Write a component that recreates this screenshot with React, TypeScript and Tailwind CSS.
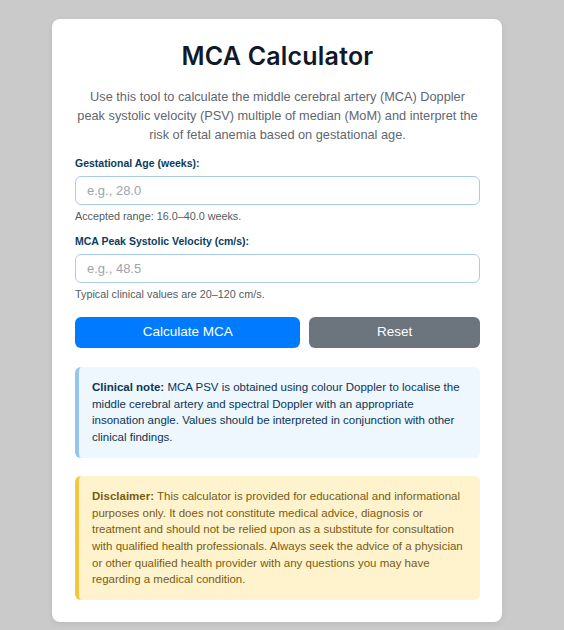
export default function App() {
  return (
    <div className="min-h-[630px] bg-[#cacaca] pt-[19px] pb-[9px] pl-[52px]" style={{ fontFamily: '"Liberation Sans", Arial, sans-serif' }}>
      <div className="w-[450px] rounded-[8px] bg-white pt-[22px] pb-[22px] pl-[23px] pr-[22px] shadow-[0_2px_6px_rgba(0,0,0,0.08)]">
        {/* Header */}
        <h1 className="text-center text-[25px] leading-[31px] font-semibold text-[#111827] tracking-[0.2px]" style={{ fontFamily: 'Inter, "Noto Sans", sans-serif' }}>
          MCA Calculator
        </h1>
        <p className="mt-[15px] text-center text-[12.75px] leading-[19px] text-[#5f6670]">
          Use this tool to calculate the middle cerebral artery (MCA) Doppler peak systolic velocity (PSV) multiple of median (MoM) and interpret the risk of fetal anemia based on gestational age.
        </p>

        {/* Gestational age */}
        <div className="mt-[12px]">
          <label className="block text-[10.5px] leading-[14px] font-bold text-[#0b3b5c] mb-[6px]">Gestational Age (weeks):</label>
          <input
            type="text"
            placeholder="e.g., 28.0"
            className="block w-full h-[29px] rounded-[6px] border border-[#a9cde9] px-[11px] text-[13px] text-[#333] placeholder:text-[#a0a4a8] outline-none"
          />
          <div className="mt-[5px] text-[10.8px] leading-[13px] text-[#555b61]">Accepted range: 16.0–40.0 weeks.</div>
        </div>

        {/* PSV */}
        <div className="mt-[11px]">
          <label className="block text-[10.5px] leading-[14px] font-bold text-[#0b3b5c] mb-[6px]">MCA Peak Systolic Velocity (cm/s):</label>
          <input
            type="text"
            placeholder="e.g., 48.5"
            className="block w-full h-[29px] rounded-[6px] border border-[#a9cde9] px-[11px] text-[13px] text-[#333] placeholder:text-[#a0a4a8] outline-none"
          />
          <div className="mt-[5px] text-[10.8px] leading-[13px] text-[#555b61]">Typical clinical values are 20–120 cm/s.</div>
        </div>

        {/* Buttons */}
        <div className="mt-[16px] flex gap-[9px]">
          <button className="flex-auto h-[31px] rounded-[6px] bg-[#007bff] text-white text-[13.5px]">Calculate MCA</button>
          <button className="flex-auto h-[31px] rounded-[6px] bg-[#6c757d] text-white text-[13.5px]">Reset</button>
        </div>

        {/* Clinical note */}
        <div className="mt-[19px] rounded-[6px] border-l-[4px] border-[#93c5ee] bg-[#eef6fe] py-[12px] pl-[13px] pr-[12px] text-[11.5px] leading-[16.7px] text-[#0c3553]">
          <strong>Clinical note:</strong> MCA PSV is obtained using colour Doppler to localise the middle cerebral artery and spectral Doppler with an appropriate insonation angle. Values should be interpreted in conjunction with other clinical findings.
        </div>

        {/* Disclaimer */}
        <div className="mt-[18px] rounded-[6px] border-l-[4px] border-[#f4c63d] bg-[#fff3cd] py-[12px] pl-[13px] pr-[12px] text-[11.5px] leading-[16.7px] text-[#7a5b12]">
          <strong>Disclaimer:</strong> This calculator is provided for educational and informational purposes only. It does not constitute medical advice, diagnosis or treatment and should not be relied upon as a substitute for consultation with qualified health professionals. Always seek the advice of a physician or other qualified health provider with any questions you may have regarding a medical condition.
        </div>
      </div>
    </div>
  );
}
